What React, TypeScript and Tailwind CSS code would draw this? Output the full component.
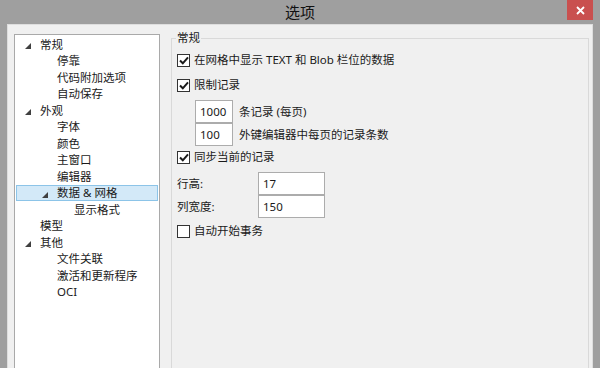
import React from "react";

type Node = { label: string; level: number; open?: boolean; selected?: boolean };

const tree: Node[] = [
  { label: "常规", level: 0, open: true },
  { label: "停靠", level: 1 },
  { label: "代码附加选项", level: 1 },
  { label: "自动保存", level: 1 },
  { label: "外观", level: 0, open: true },
  { label: "字体", level: 1 },
  { label: "颜色", level: 1 },
  { label: "主窗口", level: 1 },
  { label: "编辑器", level: 1 },
  { label: "数据 & 网格", level: 1, open: true, selected: true },
  { label: "显示格式", level: 2 },
  { label: "模型", level: 0 },
  { label: "其他", level: 0, open: true },
  { label: "文件关联", level: 1 },
  { label: "激活和更新程序", level: 1 },
  { label: "OCI", level: 1 },
];

const indent = ["pl-[23px]", "pl-[40px]", "pl-[57px]"];
const arrowPos = ["left-[8px]", "left-[25px]", "left-[42px]"];

function Expander({ level }: { level: number }) {
  return (
    <svg
      className={`absolute top-[6px] ${arrowPos[level]}`}
      width="6"
      height="6"
      viewBox="0 0 6 6"
    >
      <polygon points="6,0 6,6 0,6" fill="#404040" />
    </svg>
  );
}

function Checkbox({ checked }: { checked?: boolean }) {
  return (
    <span className="flex h-[13px] w-[13px] shrink-0 items-center justify-center border border-[#333] bg-white">
      {checked && (
        <svg width="10" height="9" viewBox="0 0 10 9">
          <path
            d="M1 4.5 L3.8 7.3 L9 1.3"
            fill="none"
            stroke="#1a1a1a"
            strokeWidth="2"
          />
        </svg>
      )}
    </span>
  );
}

function CheckRow({ checked, label, className = "" }: { checked?: boolean; label: string; className?: string }) {
  return (
    <div className={`flex h-[16px] items-center gap-[4px] ${className}`}>
      <Checkbox checked={checked} />
      <span>{label}</span>
    </div>
  );
}

function Field({ value, className = "" }: { value: string; className?: string }) {
  return (
    <div
      className={`flex h-[23px] items-center border border-[#acacac] bg-white pl-[4px] ${className}`}
    >
      {value}
    </div>
  );
}

export default function App() {
  return (
    <div
      className="flex h-[368px] w-[600px] flex-col overflow-hidden bg-[#9f9f9f] text-[11.5px] text-[#1a1a1a]"
      style={{ fontFamily: '"Noto Sans", "Noto Sans CJK SC", sans-serif' }}
    >
      <div className="relative flex h-[24px] shrink-0 items-center justify-center">
        <span className="text-[15px] text-[#111]">选项</span>
        <div className="absolute right-[7px] top-0 flex h-[20px] w-[26px] items-center justify-center bg-[#c9504f]">
          <svg width="9" height="9" viewBox="0 0 9 9">
            <path d="M1 1 L8 8 M8 1 L1 8" stroke="#fff" strokeWidth="1.8" />
          </svg>
        </div>
      </div>

      <div className="mx-[7px] flex flex-1 border-x border-t border-[#dedede] bg-[#f0f0f0] pl-[6px] pt-[9px]">
        <div className="h-[400px] w-[146px] shrink-0 border border-[#a9a9a9] bg-white pt-[1px]">
          {tree.map((n) => (
            <div
              key={n.label}
              className={`relative mx-[1px] flex h-[16.5px] items-center leading-none ${indent[n.level]} ${
                n.selected ? "border border-[#8cc4e8] bg-[#d3e9f8]" : "border border-transparent"
              }`}
            >
              {n.open && <Expander level={n.level} />}
              <span>{n.label}</span>
            </div>
          ))}
        </div>

        <div className="ml-[11px] w-[418px] pt-[4px]">
          <div className="relative h-[400px] border border-[#d9d9d9] pl-[5px] pt-[13px]">
            <span className="absolute left-[4px] top-[-9px] bg-[#f0f0f0] px-[1px] leading-[16px]">
              常规
            </span>
            <CheckRow checked label="在网格中显示 TEXT 和 Blob 栏位的数据" />
            <CheckRow checked label="限制记录" className="mt-[9px]" />
            <div className="ml-[18px] mt-[7px] flex flex-col">
              <div className="flex items-center gap-[6px]">
                <Field value="1000" className="w-[38px]" />
                <span>条记录 (每页)</span>
              </div>
              <div className="flex items-center gap-[6px]">
                <Field value="100" className="w-[38px]" />
                <span>外键编辑器中每页的记录条数</span>
              </div>
            </div>
            <CheckRow checked label="同步当前的记录" className="mt-[3px]" />
            <div className="mt-[7px] flex flex-col">
              <div className="flex items-center">
                <span className="w-[81px]">行高:</span>
                <Field value="17" className="w-[67px]" />
              </div>
              <div className="flex items-center">
                <span className="w-[81px]">列宽度:</span>
                <Field value="150" className="w-[67px]" />
              </div>
            </div>
            <CheckRow label="自动开始事务" className="mt-[5px]" />
          </div>
        </div>
      </div>
    </div>
  );
}
